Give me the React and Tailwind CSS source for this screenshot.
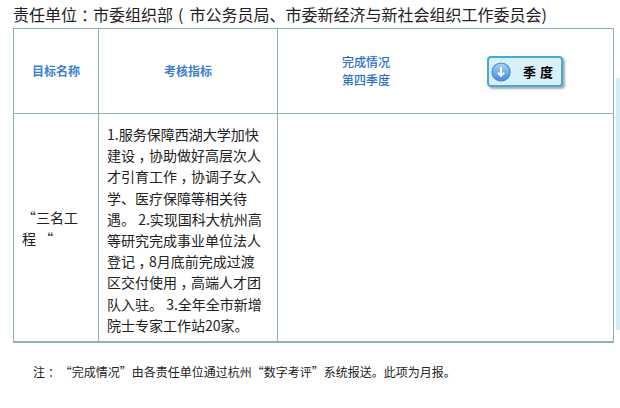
const cjk = "font-['Noto_Sans_CJK_SC','Noto_Sans',sans-serif]";

// full-width marks sit centred in the reference, halt + margins gets them there
function Mark({ children }) {
  return <span className="mx-[3.5px] [font-feature-settings:'halt']">{children}</span>;
}

function DownCircle() {
  return (
    <svg width="20" height="20" viewBox="0 0 20 20" className="shrink-0">
      <defs>
        <linearGradient id="disc" x1="0" y1="0" x2="0" y2="1">
          <stop offset="0" stopColor="#a9d4f4" />
          <stop offset="1" stopColor="#3f8fdc" />
        </linearGradient>
      </defs>
      <circle cx="10" cy="10" r="9" fill="url(#disc)" stroke="#3a8ad0" strokeWidth="1.2" />
      <path d="M10 5v9M6.8 10.6l3.2 3.4 3.2-3.4" fill="none" stroke="#fff" strokeWidth="1.8" />
    </svg>
  );
}

export default function App() {
  return (
    <div className={`w-[620px] h-[408px] bg-white overflow-hidden ${cjk} text-[#222]`}>
      <h1 className="pl-[13px] pt-[4px] h-[28px] text-[16px] leading-[20px] font-normal whitespace-nowrap">
        责任单位<span className="mx-[4px] [font-feature-settings:'halt']">：</span>市委组织部<span className="ml-[5px] mr-[6px]">(</span>市公务员局、市委新经济与新社会组织工作委员会)
      </h1>

      <div className="flex">
        <div className="ml-[13px] w-[601px] h-[315px] grid grid-cols-[85px_179px_1fr] grid-rows-[85px_1fr] border border-[#8fb3b3] border-b-2">
          <div className="flex items-center justify-center border-r border-b border-[#8fb3b3] text-[12px] font-bold text-[#3d7fd0]">
            目标名称
          </div>
          <div className="flex items-center justify-center border-r border-b border-[#8fb3b3] text-[12px] font-bold text-[#3d7fd0]">
            考核指标
          </div>
          <div className="flex items-center border-b border-[#8fb3b3]">
            <div className="ml-[64px] w-[48px] text-[12px] leading-[18px] font-medium text-[#2a6fd0]">
              <p>完成情况</p>
              <p className="whitespace-nowrap">第四季度</p>
            </div>
            <button className="ml-[97px] mt-[1px] w-[76px] h-[31px] flex items-center pl-[2px] rounded-[4px] border-2 border-[#4aa8d8] bg-[#d8effc] shadow-[2px_2px_2px_rgba(90,90,90,0.5)]">
              <DownCircle />
              <span className="ml-[12px] text-[13px] font-bold tracking-[4px] text-black">季度</span>
            </button>
          </div>

          <div className="flex items-center border-r border-[#8fb3b3] pl-[8px] pr-[14px] text-[14px] leading-[21px]">
            <div>
              <p>“三名工</p>
              <p>程 “</p>
            </div>
          </div>
          <div className="border-r border-[#8fb3b3] pl-[8px] pt-[10px] text-[14px] leading-[21.2px] whitespace-pre">
            <p>1.服务保障西湖大学加快</p>
            <p>建设<Mark>，</Mark>协助做好高层次人</p>
            <p>才引育工作<Mark>，</Mark>协调子女入</p>
            <p>学、医疗保障等相关待</p>
            <p>遇。 2.实现国科大杭州高</p>
            <p>等研究完成事业单位法人</p>
            <p>登记<Mark>，</Mark>8月底前完成过渡</p>
            <p>区交付使用<Mark>，</Mark>高端人才团</p>
            <p>队入驻。 3.全年全市新增</p>
            <p>院士专家工作站20家。</p>
          </div>
          <div />
        </div>
        <div className="ml-[2px] mt-[50px] w-[4px] h-[252px] bg-[#cdeefb]" />
      </div>

      <p className="pl-[33px] pt-[20px] text-[12px] leading-[18px] whitespace-nowrap">
        注<span className="mx-[3px] [font-feature-settings:'halt']">：</span> “完成情况”由各责任单位通过杭州“数字考评”系统报送。此项为月报。
      </p>
    </div>
  );
}
